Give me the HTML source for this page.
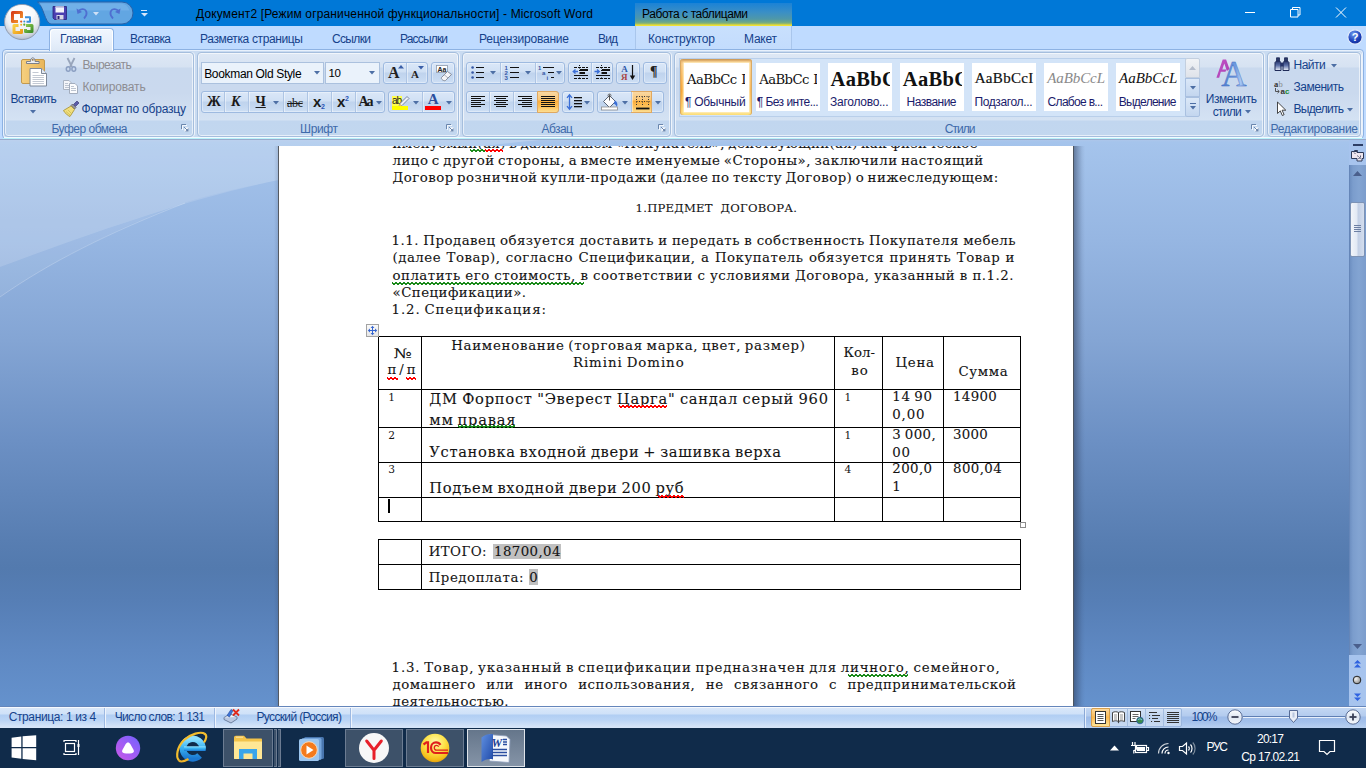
<!DOCTYPE html>
<html lang="ru">
<head>
<meta charset="utf-8">
<title>Документ2 - Microsoft Word</title>
<style>
*{box-sizing:border-box;margin:0;padding:0}
html,body{width:1366px;height:768px;overflow:hidden;background:#bfdbff}
body{position:relative;font-family:"Liberation Sans",sans-serif;font-size:12px;color:#15428b}
.abs{position:absolute}
.t{position:absolute;white-space:pre;line-height:1}
svg{display:block;overflow:visible}
</style>
</head>
<body>
<div style="position:absolute;left:0px;top:0px;width:1366px;height:26px;background:#0078d7"></div>
<svg class="abs" style="left:30px;top:0" width="120" height="27" viewBox="0 0 120 27"><path d="M7.500 2H92a11 11 0 0 1 0 22H21C15 24 13 4 7.500 2Z" fill="#62a6e2" stroke="#2a62a8" stroke-width="1"/><path d="M8 3.5 H90 a10 10 0 0 1 9.5 7 H13.5 C 12 7 10.5 4.5 8 3.5Z" fill="#7db8ec" opacity=".55"/></svg>
<span class="t" style="left:196px;top:8.04px;font-size:12px;color:#000;letter-spacing:0.144px;">Документ2 [Режим ограниченной функциональности] - Microsoft Word</span>
<div style="position:absolute;left:635px;top:3px;width:157px;height:23px;background:linear-gradient(#1b82d6 0%,#3a8fc6 40%,#4f98a8 70%,#6ea888 84%,#9fbc66 91%,#f2e22c 96%,#ece040 100%)"></div>
<span class="t" style="left:642px;top:8.04px;font-size:12px;color:#000;letter-spacing:-0.403px;">Работа с таблицами</span>
<svg class="abs" style="left:1236px;top:0" width="120" height="26" viewBox="0 0 120 26" fill="none" stroke="#fff" stroke-width="1"><path d="M9 12.5h10"/><path d="M54.5 9.5h7.5v7.5h-7.5z M56.5 9.5v-2h7.5v7.5h-2"/><path d="M100 7.5l10 10M110 7.5l-10 10"/></svg>
<div style="position:absolute;left:0px;top:26px;width:1366px;height:24px;background:#bfdbff"></div>
<div style="position:absolute;left:635px;top:26px;width:157px;height:23px;background:linear-gradient(#c9e0fd,#c3dcfd);border-left:1px solid #a9c6ec;border-right:1px solid #a9c6ec"></div>
<span class="t" style="left:130px;top:32.84px;font-size:12px;color:#15428b;letter-spacing:-0.602px;">Вставка</span>
<span class="t" style="left:200px;top:32.84px;font-size:12px;color:#15428b;letter-spacing:-0.367px;">Разметка страницы</span>
<span class="t" style="left:332px;top:32.84px;font-size:12px;color:#15428b;letter-spacing:-0.650px;">Ссылки</span>
<span class="t" style="left:400px;top:32.84px;font-size:12px;color:#15428b;letter-spacing:-0.837px;">Рассылки</span>
<span class="t" style="left:479px;top:32.84px;font-size:12px;color:#15428b;letter-spacing:-0.206px;">Рецензирование</span>
<span class="t" style="left:598px;top:32.84px;font-size:12px;color:#15428b;letter-spacing:-0.859px;">Вид</span>
<span class="t" style="left:648px;top:32.84px;font-size:12px;color:#15428b;letter-spacing:-0.142px;">Конструктор</span>
<span class="t" style="left:744px;top:32.84px;font-size:12px;color:#15428b;letter-spacing:-0.242px;">Макет</span>
<svg class="abs" style="left:1347px;top:29px" width="16" height="16" viewBox="0 0 16 16"><defs><radialGradient id="hg" cx=".4" cy=".3" r=".8"><stop offset="0" stop-color="#6f9cf0"/><stop offset=".6" stop-color="#1c3fb8"/><stop offset="1" stop-color="#0f2a8c"/></radialGradient></defs><circle cx="8" cy="8" r="7.2" fill="url(#hg)" stroke="#dfe9fb" stroke-width="1.2"/><text x="8" y="12" text-anchor="middle" font-family="Liberation Sans,sans-serif" font-weight="bold" font-size="11" fill="#fff">?</text></svg>
<div class="abs" style="left:2px;top:49px;width:1362px;height:90px;border:1px solid #8db2e3;border-radius:4px;background:#c9dbf1;box-shadow:inset 0 0 0 1px #e8f1fc"></div>
<div style="position:absolute;left:4px;top:137px;width:1358px;height:1px;background:#f2faff"></div>
<div style="position:absolute;left:3px;top:138px;width:1360px;height:1px;background:#b8f2fa"></div>
<div class="abs" style="left:49px;top:28px;width:65px;height:23px;border:1px solid #8db2e3;border-bottom:none;border-radius:4px 4px 0 0;background:linear-gradient(#f0f6fe,#e6effb 60%,#dde8f6);box-shadow:inset 1px 1px 0 #fff,inset -1px 0 0 #fff"></div>
<span class="t" style="left:60px;top:32.84px;font-size:12px;color:#15428b;letter-spacing:-0.615px;">Главная</span>
<div class="abs" style="left:4px;top:52px;width:190px;height:85px;border:1px solid #a5bedd;border-radius:4px;background:linear-gradient(#dee8f5 0,#d6e2f2 14px,#c9d9ee 15px,#cad9ee 40px,#d4e2f3 67px,#c1d6ef 68px,#c2d7ef 100%);box-shadow:inset 0 0 0 1px rgba(255,255,255,.6),1px 0 0 rgba(255,255,255,.7)"></div>
<span class="t" style="left:51.5px;top:122.54px;font-size:12px;color:#3e6aaa;letter-spacing:-0.504px;">Буфер обмена</span>
<svg class="abs" style="left:181px;top:124px" width="9" height="9" viewBox="0 0 9 9"><path d="M.5 5V.5H5" fill="none" stroke="#6a86ad"/><path d="M1.5 6V1.5H6" fill="none" stroke="#fff" opacity=".8"/><path d="M3.5 3.5h4v4h-4z" fill="#fff"/><path d="M7.5 4v3.5H4z" fill="#6a86ad"/><path d="M3 3l3 3" stroke="#6a86ad"/></svg>
<div class="abs" style="left:197px;top:52px;width:262px;height:85px;border:1px solid #a5bedd;border-radius:4px;background:linear-gradient(#dee8f5 0,#d6e2f2 14px,#c9d9ee 15px,#cad9ee 40px,#d4e2f3 67px,#c1d6ef 68px,#c2d7ef 100%);box-shadow:inset 0 0 0 1px rgba(255,255,255,.6),1px 0 0 rgba(255,255,255,.7)"></div>
<span class="t" style="left:300px;top:122.54px;font-size:12px;color:#3e6aaa;letter-spacing:-0.371px;">Шрифт</span>
<svg class="abs" style="left:446px;top:124px" width="9" height="9" viewBox="0 0 9 9"><path d="M.5 5V.5H5" fill="none" stroke="#6a86ad"/><path d="M1.5 6V1.5H6" fill="none" stroke="#fff" opacity=".8"/><path d="M3.5 3.5h4v4h-4z" fill="#fff"/><path d="M7.5 4v3.5H4z" fill="#6a86ad"/><path d="M3 3l3 3" stroke="#6a86ad"/></svg>
<div class="abs" style="left:462px;top:52px;width:209px;height:85px;border:1px solid #a5bedd;border-radius:4px;background:linear-gradient(#dee8f5 0,#d6e2f2 14px,#c9d9ee 15px,#cad9ee 40px,#d4e2f3 67px,#c1d6ef 68px,#c2d7ef 100%);box-shadow:inset 0 0 0 1px rgba(255,255,255,.6),1px 0 0 rgba(255,255,255,.7)"></div>
<span class="t" style="left:541.6px;top:122.54px;font-size:12px;color:#3e6aaa;letter-spacing:-0.568px;">Абзац</span>
<svg class="abs" style="left:658px;top:124px" width="9" height="9" viewBox="0 0 9 9"><path d="M.5 5V.5H5" fill="none" stroke="#6a86ad"/><path d="M1.5 6V1.5H6" fill="none" stroke="#fff" opacity=".8"/><path d="M3.5 3.5h4v4h-4z" fill="#fff"/><path d="M7.5 4v3.5H4z" fill="#6a86ad"/><path d="M3 3l3 3" stroke="#6a86ad"/></svg>
<div class="abs" style="left:674px;top:52px;width:590px;height:85px;border:1px solid #a5bedd;border-radius:4px;background:linear-gradient(#dee8f5 0,#d6e2f2 14px,#c9d9ee 15px,#cad9ee 40px,#d4e2f3 67px,#c1d6ef 68px,#c2d7ef 100%);box-shadow:inset 0 0 0 1px rgba(255,255,255,.6),1px 0 0 rgba(255,255,255,.7)"></div>
<span class="t" style="left:944.7px;top:122.54px;font-size:12px;color:#3e6aaa;letter-spacing:-0.920px;">Стили</span>
<svg class="abs" style="left:1251px;top:124px" width="9" height="9" viewBox="0 0 9 9"><path d="M.5 5V.5H5" fill="none" stroke="#6a86ad"/><path d="M1.5 6V1.5H6" fill="none" stroke="#fff" opacity=".8"/><path d="M3.5 3.5h4v4h-4z" fill="#fff"/><path d="M7.5 4v3.5H4z" fill="#6a86ad"/><path d="M3 3l3 3" stroke="#6a86ad"/></svg>
<div class="abs" style="left:1267px;top:52px;width:94px;height:85px;border:1px solid #a5bedd;border-radius:4px;background:linear-gradient(#dee8f5 0,#d6e2f2 14px,#c9d9ee 15px,#cad9ee 40px,#d4e2f3 67px,#c1d6ef 68px,#c2d7ef 100%);box-shadow:inset 0 0 0 1px rgba(255,255,255,.6),1px 0 0 rgba(255,255,255,.7)"></div>
<span class="t" style="left:1270.5px;top:122.54px;font-size:12px;color:#3e6aaa;letter-spacing:-0.302px;">Редактирование</span>
<svg class="abs" style="left:19px;top:56px" width="30" height="32" viewBox="0 0 30 32">
<defs><linearGradient id="cb" x1="0" x2="1"><stop offset="0" stop-color="#f6d07f"/><stop offset="1" stop-color="#e9b559"/></linearGradient></defs>
<rect x="2.500" y="3.500" width="23" height="24" rx="1.500" fill="url(#cb)" stroke="#c39a4e"/>
<path d="M7.500 7.500V5.500h4c0-2 .8-3.700 2.300-3.700s2.300 1.700 2.300 3.700h4v2z" fill="#eceef2" stroke="#6f7684" stroke-width=".9"/><circle cx="13.800" cy="3.800" r=".9" fill="#8a6a3a"/>
<path d="M11 12.500h11.500l5 5v12.500H11z" fill="#fff" stroke="#7d8899"/>
<path d="M22.500 12.500v5h5" fill="#e4e9f1" stroke="#7d8899"/>
<path d="M13.500 16.500h6M13.500 19.500h11.500M13.500 21.500h11.500M13.500 23.500h11.500M13.500 25.500h11.500M13.500 27.500h11.500" stroke="#c3c9d3" stroke-width="1"/>
</svg>
<span class="t" style="left:10.5px;top:92.74px;font-size:12px;color:#15428b;letter-spacing:-0.654px;">Вставить</span>
<svg class="abs" style="left:30.4px;top:110.2px" width="6" height="4" viewBox="0 0 6 4"><path d="M0 0h6l-3.0 3.5z" fill="#4d6fa5"/></svg>
<svg class="abs" style="left:64px;top:57px" width="14" height="16" viewBox="0 0 14 16" fill="none">
<path d="M3.500 1l4.500 9M10.500 1L6 10" stroke="#98a5bb" stroke-width="1.800"/>
<ellipse cx="4.200" cy="12" rx="1.900" ry="2.300" stroke="#8b9fc2" stroke-width="1.500"/><ellipse cx="9.800" cy="12" rx="1.900" ry="2.300" stroke="#8b9fc2" stroke-width="1.500"/></svg>
<span class="t" style="left:82.4px;top:58.84px;font-size:12px;color:#8d8d92;letter-spacing:-0.568px;">Вырезать</span>
<svg class="abs" style="left:62px;top:80px" width="17" height="14" viewBox="0 0 17 14">
<path d="M1.500 .5h5.500l2.500 2.500v6.500h-8z" fill="#f4f6fa" stroke="#a9b3c2"/><path d="M3 3.500h3M3 5.500h5M3 7.500h5" stroke="#bcc4d0"/>
<path d="M7.500 3.500h5.500l2.500 2.500v7.500h-8z" fill="#fbfcfe" stroke="#a3adbd"/><path d="M9 6.500h3M9 8.500h5M9 10.500h5" stroke="#bcc4d0"/></svg>
<span class="t" style="left:82.4px;top:81.14px;font-size:12px;color:#8d8d92;letter-spacing:-0.147px;">Копировать</span>
<svg class="abs" style="left:62px;top:100px" width="18" height="17" viewBox="0 0 18 17">
<path d="M11.500 4.500l3.500-3.500 2 2-3.500 3.500z" fill="#5c5ca8" stroke="#3c3c78" stroke-width=".7"/>
<path d="M9 5.500l3.500 3.500 1.500-1.500-3.500-3.500z" fill="#9a9aa0" stroke="#55555d" stroke-width=".7"/>
<path d="M1.500 10.500l7.500-4.500 3.500 3.500-4.500 7c-1.500-.5-5.500-3.500-6.500-6z" fill="#f0de7c" stroke="#a58f2e" stroke-width=".8"/>
<path d="M4 11.500l4 3.500M6 10l3.500 3.500" stroke="#c9b44a" stroke-width=".7"/></svg>
<span class="t" style="left:81.5px;top:103.24px;font-size:12px;color:#15428b;letter-spacing:-0.194px;">Формат по образцу</span>
<div class="abs" style="left:201px;top:62px;width:123px;height:22px;border:1px solid #abc1de;background:#eaf2fb"></div>
<div class="abs" style="left:325px;top:62px;width:55px;height:22px;border:1px solid #abc1de;background:#eaf2fb"></div>
<span class="t" style="left:204.2px;top:67.84px;font-size:12px;color:#000;letter-spacing:-0.332px;">Bookman Old Style</span>
<span class="t" style="left:328.6px;top:68.27px;font-size:11.5px;color:#000;letter-spacing:-0.600px;">10</span>
<svg class="abs" style="left:314.4px;top:70.5px" width="6" height="4" viewBox="0 0 6 4"><path d="M0 0h6l-3.0 3.5z" fill="#4d6fa5"/></svg>
<svg class="abs" style="left:369.3px;top:70.5px" width="6" height="4" viewBox="0 0 6 4"><path d="M0 0h6l-3.0 3.5z" fill="#4d6fa5"/></svg>
<div class="abs" style="left:383px;top:62px;width:45px;height:22px;border:1px solid #9ebae0;border-radius:3px;background:linear-gradient(#dae7f8 0,#d0e0f4 9px,#bfd3ed 10px,#c6d9f1 16px,#d3e3f7 22px);box-shadow:inset 0 0 0 1px rgba(255,255,255,.35)"><div style="position:absolute;left:22px;top:0;width:1px;height:20px;background:#aec5e4;box-shadow:1px 0 0 rgba(255,255,255,.45)"></div></div>
<span class="t" style="left:388px;top:65.30px;font-size:16px;font-family:'Liberation Serif',serif;color:#222;font-weight:bold;">A</span>
<span class="t" style="left:411px;top:69.49px;font-size:11px;font-family:'Liberation Serif',serif;color:#222;font-weight:bold;">A</span>
<svg class="abs" style="left:398px;top:65px" width="6" height="4"><path d="M0 3.500h6L3 0z" fill="#3b5fa8"/></svg>
<svg class="abs" style="left:418px;top:66px" width="6" height="4"><path d="M0 0h6L3 3.500z" fill="#3b5fa8"/></svg>
<div class="abs" style="left:431px;top:62px;width:24px;height:22px;border:1px solid #9ebae0;border-radius:3px;background:linear-gradient(#dae7f8 0,#d0e0f4 9px,#bfd3ed 10px,#c6d9f1 16px,#d3e3f7 22px);box-shadow:inset 0 0 0 1px rgba(255,255,255,.35)"></div>
<svg class="abs" style="left:435px;top:64px" width="18" height="18" viewBox="0 0 18 18">
<rect x="1.500" y="1.500" width="11" height="7" fill="#fff" stroke="#8d99ab" stroke-width=".8"/>
<text x="2.500" y="8" font-family="Liberation Sans,sans-serif" font-size="7" font-weight="bold" fill="#222">Aa</text>
<path d="M6.500 13.500l6-6 4 3-6 6c-1.500 1-5-1.500-4-3z" fill="#f4f4f8" stroke="#7d8594" stroke-width=".9"/><path d="M9 10.500l4 3.500" stroke="#9aa2b0" stroke-width=".8"/></svg>
<div class="abs" style="left:201px;top:91px;width:184px;height:22px;border:1px solid #9ebae0;border-radius:3px;background:linear-gradient(#dae7f8 0,#d0e0f4 9px,#bfd3ed 10px,#c6d9f1 16px,#d3e3f7 22px);box-shadow:inset 0 0 0 1px rgba(255,255,255,.35)"><div style="position:absolute;left:22px;top:0;width:1px;height:20px;background:#aec5e4;box-shadow:1px 0 0 rgba(255,255,255,.45)"></div><div style="position:absolute;left:46px;top:0;width:1px;height:20px;background:#aec5e4;box-shadow:1px 0 0 rgba(255,255,255,.45)"></div><div style="position:absolute;left:80.5px;top:0;width:1px;height:20px;background:#aec5e4;box-shadow:1px 0 0 rgba(255,255,255,.45)"></div><div style="position:absolute;left:105px;top:0;width:1px;height:20px;background:#aec5e4;box-shadow:1px 0 0 rgba(255,255,255,.45)"></div><div style="position:absolute;left:128.5px;top:0;width:1px;height:20px;background:#aec5e4;box-shadow:1px 0 0 rgba(255,255,255,.45)"></div><div style="position:absolute;left:153px;top:0;width:1px;height:20px;background:#aec5e4;box-shadow:1px 0 0 rgba(255,255,255,.45)"></div></div>
<span class="t" style="left:207px;top:94.88px;font-size:14px;font-family:'Liberation Serif',serif;color:#1a1a1a;font-weight:bold;">Ж</span>
<span class="t" style="left:231px;top:94.88px;font-size:14px;font-family:'Liberation Serif',serif;color:#1a1a1a;font-weight:bold;font-style:italic;">К</span>
<span class="t" style="left:255.5px;top:94.88px;font-size:14px;font-family:'Liberation Serif',serif;color:#1a1a1a;font-weight:bold;text-decoration:underline;">Ч</span>
<svg class="abs" style="left:273.4px;top:100.5px" width="6" height="4" viewBox="0 0 6 4"><path d="M0 0h6l-3.0 3.5z" fill="#4d6fa5"/></svg>
<span class="t" style="left:287px;top:96.55px;font-size:12px;font-family:'Liberation Serif',serif;color:#1a1a1a;letter-spacing:-0.328px;text-decoration:line-through;">abc</span>
<span class="t" style="left:313px;top:93.90px;font-size:15px;color:#1a1a1a;font-weight:bold;">x</span>
<span class="t" style="left:321px;top:102.57px;font-size:7px;color:#2a55b5;font-weight:bold;">2</span>
<span class="t" style="left:337px;top:93.90px;font-size:15px;color:#1a1a1a;font-weight:bold;">x</span>
<span class="t" style="left:345px;top:94.57px;font-size:7px;color:#2a55b5;font-weight:bold;">2</span>
<span class="t" style="left:358.5px;top:95.28px;font-size:14px;font-family:'Liberation Serif',serif;color:#1a1a1a;font-weight:bold;letter-spacing:-2.125px;">Aa</span>
<svg class="abs" style="left:375.9px;top:100.5px" width="6" height="4" viewBox="0 0 6 4"><path d="M0 0h6l-3.0 3.5z" fill="#4d6fa5"/></svg>
<div class="abs" style="left:388px;top:91px;width:67px;height:22px;border:1px solid #9ebae0;border-radius:3px;background:linear-gradient(#dae7f8 0,#d0e0f4 9px,#bfd3ed 10px,#c6d9f1 16px,#d3e3f7 22px);box-shadow:inset 0 0 0 1px rgba(255,255,255,.35)"><div style="position:absolute;left:33px;top:0;width:1px;height:20px;background:#aec5e4;box-shadow:1px 0 0 rgba(255,255,255,.45)"></div></div>
<div style="position:absolute;left:391.8px;top:96px;width:10.5px;height:10px;background:#ffff4d"></div>
<span class="t" style="left:392px;top:95.53px;font-size:10px;color:#222;letter-spacing:-1.125px;">ab</span>
<svg class="abs" style="left:397px;top:94px" width="13" height="13" viewBox="0 0 13 13"><path d="M3 9.500l7-7 2 2-7 7-3 .8z" fill="#eef1f7" stroke="#6d7c99" stroke-width=".9"/><path d="M3 9.500l2 2-3 .8z" fill="#e7c36a"/></svg>
<div style="position:absolute;left:391.8px;top:106px;width:16.6px;height:4px;background:#ffff00"></div>
<svg class="abs" style="left:412.6px;top:100.5px" width="6" height="4" viewBox="0 0 6 4"><path d="M0 0h6l-3.0 3.5z" fill="#4d6fa5"/></svg>
<span class="t" style="left:427.7px;top:92.24px;font-size:15px;font-family:'Liberation Serif',serif;color:#2b4f9e;font-weight:bold;">A</span>
<div style="position:absolute;left:425px;top:106px;width:16.2px;height:4px;background:#ff0000"></div>
<svg class="abs" style="left:445.5px;top:100.5px" width="6" height="4" viewBox="0 0 6 4"><path d="M0 0h6l-3.0 3.5z" fill="#4d6fa5"/></svg>
<div class="abs" style="left:466px;top:62px;width:99px;height:22px;border:1px solid #9ebae0;border-radius:3px;background:linear-gradient(#dae7f8 0,#d0e0f4 9px,#bfd3ed 10px,#c6d9f1 16px,#d3e3f7 22px);box-shadow:inset 0 0 0 1px rgba(255,255,255,.35)"><div style="position:absolute;left:33px;top:0;width:1px;height:20px;background:#aec5e4;box-shadow:1px 0 0 rgba(255,255,255,.45)"></div><div style="position:absolute;left:67.60000000000002px;top:0;width:1px;height:20px;background:#aec5e4;box-shadow:1px 0 0 rgba(255,255,255,.45)"></div></div>
<svg class="abs" style="left:470px;top:64px" width="16" height="16" viewBox="0 0 16 16"><g fill="#3557a5"><circle cx="2.600" cy="3.500" r="1.300"/><circle cx="2.600" cy="8.500" r="1.300"/><circle cx="2.600" cy="13.500" r="1.300"/></g><path d="M6 3.500h8M6 8.500h8M6 13.500h8" stroke="#111" stroke-width="1.200"/></svg>
<svg class="abs" style="left:490.3px;top:70.5px" width="6" height="4" viewBox="0 0 6 4"><path d="M0 0h6l-3.0 3.5z" fill="#4d6fa5"/></svg>
<svg class="abs" style="left:503px;top:64px" width="18" height="16" viewBox="0 0 18 16"><g font-family="Liberation Sans,sans-serif" font-size="6" font-weight="bold" fill="#3557a5"><text x="1.500" y="5.500">1</text><text x="1.500" y="10.500">2</text><text x="1.500" y="15.500">3</text></g><path d="M7 3.500h9M7 8.500h9M7 13.500h9" stroke="#111" stroke-width="1.200"/></svg>
<svg class="abs" style="left:525.3px;top:70.5px" width="6" height="4" viewBox="0 0 6 4"><path d="M0 0h6l-3.0 3.5z" fill="#4d6fa5"/></svg>
<svg class="abs" style="left:537px;top:64px" width="19" height="17" viewBox="0 0 19 17"><g font-family="Liberation Sans,sans-serif" font-size="6" font-weight="bold" fill="#3557a5"><text x="1" y="5.500">1</text><text x="5" y="10.500">a</text><text x="9.500" y="16">i</text></g><path d="M6 3.500h11M11 8.500h6M14 13.500h3" stroke="#111" stroke-width="1.200"/></svg>
<svg class="abs" style="left:555.7px;top:70.5px" width="6" height="4" viewBox="0 0 6 4"><path d="M0 0h6l-3.0 3.5z" fill="#4d6fa5"/></svg>
<div class="abs" style="left:568px;top:62px;width:45px;height:22px;border:1px solid #9ebae0;border-radius:3px;background:linear-gradient(#dae7f8 0,#d0e0f4 9px,#bfd3ed 10px,#c6d9f1 16px,#d3e3f7 22px);box-shadow:inset 0 0 0 1px rgba(255,255,255,.35)"><div style="position:absolute;left:21.799999999999955px;top:0;width:1px;height:20px;background:#aec5e4;box-shadow:1px 0 0 rgba(255,255,255,.45)"></div></div>
<svg class="abs" style="left:572px;top:64px" width="17" height="16" viewBox="0 0 17 16"><path d="M6 7.500H1.500M3.500 5.500l-2.300 2 2.300 2" fill="none" stroke="#3b6fd6" stroke-width="1.300"/><path d="M2 3.500h14" stroke="#111" stroke-dasharray="3 1"/><path d="M8 5h8v2h-8zM8 8h5v2h-5z" fill="#111"/><path d="M2 11.500h14" stroke="#111"/><path d="M2 14.500h14" stroke="#111" stroke-dasharray="3 1"/><path d="M7.500 1v15" stroke="#111" stroke-dasharray="1 1.500"/></svg>
<svg class="abs" style="left:594px;top:64px" width="17" height="16" viewBox="0 0 17 16"><path d="M0.500 7.500H5M3 5.500l2.300 2-2.300 2" fill="none" stroke="#3b6fd6" stroke-width="1.300"/><path d="M2 3.500h14" stroke="#111" stroke-dasharray="3 1"/><path d="M8 5h8v2h-8zM8 8h5v2h-5z" fill="#111"/><path d="M2 11.500h14" stroke="#111"/><path d="M2 14.500h14" stroke="#111" stroke-dasharray="3 1"/><path d="M7.500 1v15" stroke="#111" stroke-dasharray="1 1.500"/></svg>
<div class="abs" style="left:616px;top:62px;width:24px;height:22px;border:1px solid #9ebae0;border-radius:3px;background:linear-gradient(#dae7f8 0,#d0e0f4 9px,#bfd3ed 10px,#c6d9f1 16px,#d3e3f7 22px);box-shadow:inset 0 0 0 1px rgba(255,255,255,.35)"></div>
<span class="t" style="left:621.2px;top:64.96px;font-size:9px;font-family:'Liberation Serif',serif;color:#2d56a8;font-weight:bold;">A</span>
<span class="t" style="left:621px;top:73.06px;font-size:9px;font-family:'Liberation Serif',serif;color:#a94444;font-weight:bold;">Я</span>
<svg class="abs" style="left:629px;top:64px" width="8" height="17" viewBox="0 0 8 17"><path d="M3.500 1v13" stroke="#111" stroke-width="1.200"/><path d="M.8 11.500L3.500 16l2.700-4.500z" fill="#111"/></svg>
<div class="abs" style="left:643px;top:62px;width:24px;height:22px;border:1px solid #9ebae0;border-radius:3px;background:linear-gradient(#dae7f8 0,#d0e0f4 9px,#bfd3ed 10px,#c6d9f1 16px,#d3e3f7 22px);box-shadow:inset 0 0 0 1px rgba(255,255,255,.35)"></div>
<span class="t" style="left:650px;top:64.58px;font-size:14px;font-family:'Liberation Serif',serif;color:#222;font-weight:bold;">¶</span>
<div class="abs" style="left:466px;top:91px;width:93px;height:22px;border:1px solid #9ebae0;border-radius:3px;background:linear-gradient(#dae7f8 0,#d0e0f4 9px,#bfd3ed 10px,#c6d9f1 16px,#d3e3f7 22px);box-shadow:inset 0 0 0 1px rgba(255,255,255,.35)"><div style="position:absolute;left:69.79999999999995px;top:-1px;width:21.800000000000068px;height:22px;background:linear-gradient(#f9d8a2 0,#fbc776 8px,#fbad3c 9px,#fcc25e 15px,#fde9a6 22px);border:1px solid #e0a860;border-radius:0 3px 3px 0"></div><div style="position:absolute;left:22px;top:0;width:1px;height:20px;background:#aec5e4;box-shadow:1px 0 0 rgba(255,255,255,.45)"></div><div style="position:absolute;left:45.60000000000002px;top:0;width:1px;height:20px;background:#aec5e4;box-shadow:1px 0 0 rgba(255,255,255,.45)"></div></div>
<svg class="abs" style="left:471px;top:96px" width="14" height="12" viewBox="0 0 14 12"><path d="M0 0.5h14M0 2.5h10M0 4.5h14M0 6.5h10M0 8.5h14M0 10.5h10" stroke="#111" stroke-width="1"/></svg>
<svg class="abs" style="left:494px;top:96px" width="14" height="12" viewBox="0 0 14 12"><path d="M0 0.5h14M2 2.5h10M0 4.5h14M2 6.5h10M0 8.5h14M2 10.5h10" stroke="#111" stroke-width="1"/></svg>
<svg class="abs" style="left:518px;top:96px" width="14" height="12" viewBox="0 0 14 12"><path d="M0 0.5h14M4 2.5h10M0 4.5h14M4 6.5h10M0 8.5h14M4 10.5h10" stroke="#111" stroke-width="1"/></svg>
<svg class="abs" style="left:541px;top:96px" width="14" height="12" viewBox="0 0 14 12"><path d="M0 0.5h14M0 2.5h14M0 4.5h14M0 6.5h14M0 8.5h14M0 10.5h14" stroke="#111" stroke-width="1"/></svg>
<div class="abs" style="left:562px;top:91px;width:32px;height:22px;border:1px solid #9ebae0;border-radius:3px;background:linear-gradient(#dae7f8 0,#d0e0f4 9px,#bfd3ed 10px,#c6d9f1 16px,#d3e3f7 22px);box-shadow:inset 0 0 0 1px rgba(255,255,255,.35)"></div>
<svg class="abs" style="left:566px;top:94px" width="18" height="17" viewBox="0 0 18 17"><path d="M3.500 1v14M1 3.800L3.500 .8 6 3.800M1 12.200L3.500 15.200 6 12.200" fill="none" stroke="#3b6fd6" stroke-width="1.300"/><path d="M8 3.500h8M8 6.500h8M8 9.500h8M8 12.500h8" stroke="#111" stroke-width="1"/><path d="M8 4.500h8M8 7.500h8M8 10.500h8M8 13.500h8" stroke="#111" stroke-width="1" opacity=".3"/></svg>
<svg class="abs" style="left:583.6px;top:100.5px" width="6" height="4" viewBox="0 0 6 4"><path d="M0 0h6l-3.0 3.5z" fill="#4d6fa5"/></svg>
<div class="abs" style="left:597px;top:91px;width:67px;height:22px;border:1px solid #9ebae0;border-radius:3px;background:linear-gradient(#dae7f8 0,#d0e0f4 9px,#bfd3ed 10px,#c6d9f1 16px,#d3e3f7 22px);box-shadow:inset 0 0 0 1px rgba(255,255,255,.35)"><div style="position:absolute;left:33px;top:-1px;width:21px;height:22px;background:linear-gradient(#f9d8a2 0,#fbc776 8px,#fbad3c 9px,#fcc25e 15px,#fde9a6 22px);border:1px solid #e0a860;border-radius:0"></div><div style="position:absolute;left:33px;top:0;width:1px;height:20px;background:#aec5e4;box-shadow:1px 0 0 rgba(255,255,255,.45)"></div></div>
<svg class="abs" style="left:600px;top:93px" width="19" height="18" viewBox="0 0 19 18"><path d="M3.500 8.500l6-6 6 6-6 6z" fill="#fdfdfe" stroke="#4a5568" stroke-width=".9"/><path d="M9.500 1.500v6" stroke="#555" stroke-width="1"/><circle cx="9.500" cy="2.500" r="1.500" fill="none" stroke="#555" stroke-width=".8"/><path d="M15 7.500c2 1 3 3.500 2 6.500-1-2-2-3-3.500-3.500z" fill="#3b6fd6"/><rect x="1.500" y="14" width="16" height="3" fill="#fff" stroke="#8d8d8d" stroke-width=".8"/></svg>
<svg class="abs" style="left:621.6px;top:100.5px" width="6" height="4" viewBox="0 0 6 4"><path d="M0 0h6l-3.0 3.5z" fill="#4d6fa5"/></svg>
<svg class="abs" style="left:635px;top:95px" width="15" height="15" viewBox="0 0 15 15"><path d="M1.500 1.500h13M1.500 6.500h13M1.500 11.500h0" stroke="#333" stroke-dasharray="1 1.500"/><path d="M1.500 1.500v10M7.500 1.500v10M13.500 1.500v10" stroke="#333" stroke-dasharray="1 1.500"/><path d="M1 13.500h13.500" stroke="#111" stroke-width="1.800"/></svg>
<svg class="abs" style="left:654.5px;top:100.5px" width="6" height="4" viewBox="0 0 6 4"><path d="M0 0h6l-3.0 3.5z" fill="#4d6fa5"/></svg>
<div class="abs" style="left:679px;top:58px;width:507px;height:59px;background:#d3e4f8;border:1px solid #b9cfea;border-right:none"></div>
<div class="abs" style="left:680px;top:59px;width:72px;height:56px;border-radius:3px;background:linear-gradient(#c39355 0,#e9b772 2px,#f8c680 5px,#f9ae48 24px,#f8a333 32px,#fbc45c 46px,#fde07a 56px);box-shadow:inset 1px 0 0 #d9a863,inset -1px 0 0 #d9a863"></div>
<div style="position:absolute;left:684px;top:63px;width:64.5px;height:48.5px;background:#fff;box-shadow:0 0 1.500px 1px #fff1c4"></div>
<span class="t" style="left:687px;top:72.73px;font-size:13.2px;font-family:'DejaVu Serif',serif;color:#111;letter-spacing:-0.560px;">AaBbCc</span>
<div class="abs" style="left:740px;top:0px;width:5px;height:768px;overflow:hidden"><span class="t" style="left:1.2000000000000455px;top:72.73px;font-size:13.2px;font-family:'DejaVu Serif',serif;color:#111;">I</span></div>
<span class="t" style="left:685px;top:95.64px;font-size:12px;color:#1b1b6b;letter-spacing:-0.279px;">¶ Обычный</span>
<div style="position:absolute;left:756px;top:62.5px;width:64px;height:48.5px;background:#fff"></div>
<div style="position:absolute;left:828px;top:62.5px;width:64px;height:48.5px;background:#fff"></div>
<div style="position:absolute;left:900px;top:62.5px;width:64px;height:48.5px;background:#fff"></div>
<div style="position:absolute;left:972px;top:62.5px;width:64px;height:48.5px;background:#fff"></div>
<div style="position:absolute;left:1044px;top:62.5px;width:64px;height:48.5px;background:#fff"></div>
<div style="position:absolute;left:1116px;top:62.5px;width:64px;height:48.5px;background:#fff"></div>
<span class="t" style="left:759.2px;top:72.73px;font-size:13.2px;font-family:'DejaVu Serif',serif;color:#111;letter-spacing:-0.560px;">AaBbCc</span>
<div class="abs" style="left:812px;top:0px;width:5px;height:768px;overflow:hidden"><span class="t" style="left:1.2000000000000455px;top:72.73px;font-size:13.2px;font-family:'DejaVu Serif',serif;color:#111;">I</span></div>
<span class="t" style="left:756.7px;top:95.64px;font-size:12px;color:#1b1b6b;letter-spacing:-0.532px;">¶ Без инте...</span>
<div class="abs" style="left:829px;top:0px;width:60.5px;height:768px;overflow:hidden"><span class="t" style="left:1.6000000000000227px;top:68.63px;font-size:20.5px;font-family:'Liberation Serif',serif;color:#111;font-weight:bold;letter-spacing:0.350px;">AaBbC</span></div>
<span class="t" style="left:830px;top:95.64px;font-size:12px;color:#1b1b6b;letter-spacing:-0.267px;">Заголово...</span>
<div class="abs" style="left:901px;top:0px;width:60.5px;height:768px;overflow:hidden"><span class="t" style="left:1.7999999999999545px;top:68.63px;font-size:20.5px;font-family:'Liberation Serif',serif;color:#111;font-weight:bold;letter-spacing:0.350px;">AaBbC</span></div>
<span class="t" style="left:906.5px;top:95.64px;font-size:12px;color:#1b1b6b;letter-spacing:-0.518px;">Название</span>
<div class="abs" style="left:973px;top:0px;width:61.5px;height:768px;overflow:hidden"><span class="t" style="left:1.7000000000000455px;top:71.04px;font-size:15px;font-family:'Liberation Serif',serif;color:#111;letter-spacing:0.324px;-webkit-text-stroke:.2px #111;">AaBbCcI</span></div>
<span class="t" style="left:974.4px;top:95.64px;font-size:12px;color:#1b1b6b;letter-spacing:-0.365px;">Подзагол...</span>
<div class="abs" style="left:1045px;top:0px;width:61.5px;height:768px;overflow:hidden"><span class="t" style="left:2.2999999999999545px;top:71.04px;font-size:15px;font-family:'Liberation Serif',serif;color:#8a8a8a;font-style:italic;letter-spacing:-0.107px;">AaBbCcL</span></div>
<span class="t" style="left:1047.6px;top:95.64px;font-size:12px;color:#1b1b6b;letter-spacing:-0.688px;">Слабое в...</span>
<div class="abs" style="left:1117px;top:0px;width:61.5px;height:768px;overflow:hidden"><span class="t" style="left:2px;top:71.04px;font-size:15px;font-family:'Liberation Serif',serif;color:#111;font-style:italic;letter-spacing:-0.007px;">AaBbCcL</span></div>
<span class="t" style="left:1118.7px;top:95.64px;font-size:12px;color:#1b1b6b;letter-spacing:-0.737px;">Выделение</span>
<div class="abs" style="left:1185px;top:58px;width:15px;height:20px;border:1px solid #c3cfdf;border-radius:2px 2px 0 0;background:linear-gradient(#f1f3f6,#dfe3ea)"></div>
<svg class="abs" style="left:1189px;top:66px" width="7" height="4"><path d="M0 4h7L3.500 0z" fill="#b4bccb"/></svg>
<div class="abs" style="left:1185px;top:78px;width:15px;height:19px;border:1px solid #a9c0e0;background:linear-gradient(#dbe8f8,#c3d6ef)"></div>
<svg class="abs" style="left:1189.6px;top:86.0px" width="6" height="4" viewBox="0 0 6 4"><path d="M0 0h6l-3.0 3.5z" fill="#4d6fa5"/></svg>
<div class="abs" style="left:1185px;top:97px;width:15px;height:20px;border:1px solid #a9c0e0;border-radius:0 0 2px 2px;background:linear-gradient(#dbe8f8,#c3d6ef)"></div>
<div style="position:absolute;left:1190px;top:103px;width:6px;height:1px;background:#4d6fa5"></div>
<svg class="abs" style="left:1189.6px;top:106.0px" width="6" height="4" viewBox="0 0 6 4"><path d="M0 0h6l-3.0 3.5z" fill="#4d6fa5"/></svg>
<svg class="abs" style="left:1213px;top:57px" width="36" height="32" viewBox="0 0 36 32">
<defs><linearGradient id="ap" x1="0" y1="0" x2="1" y2="1"><stop offset="0" stop-color="#c455c8"/><stop offset="1" stop-color="#a83db0"/></linearGradient>
<linearGradient id="ab" x1="0" y1="0" x2="1" y2="0"><stop offset="0" stop-color="#4f7fd0"/><stop offset=".55" stop-color="#6f9be0"/><stop offset=".75" stop-color="#a9c8f4"/><stop offset="1" stop-color="#4a7acb"/></linearGradient></defs>
<path d="M3.400 20.700L9.700 2.500h3.400l3.400 9.500-2.600 2-2.600-7.500-2 6h4l-.8 2.300H7.800L6.200 20.700z" fill="url(#ap)"/>
<text x="8.200" y="28.800" font-family="Liberation Serif,serif" font-size="35" fill="url(#ab)" stroke="#3f6cc0" stroke-width=".4">A</text></svg>
<span class="t" style="left:1205.7px;top:92.74px;font-size:12px;color:#15428b;letter-spacing:-0.406px;">Изменить</span>
<span class="t" style="left:1212.7px;top:106.04px;font-size:12px;color:#15428b;letter-spacing:-0.727px;">стили</span>
<svg class="abs" style="left:1244.9px;top:110.2px" width="6" height="4" viewBox="0 0 6 4"><path d="M0 0h6l-3.0 3.5z" fill="#4d6fa5"/></svg>
<svg class="abs" style="left:1274px;top:57px" width="16" height="15" viewBox="0 0 16 15">
<defs><linearGradient id="bn" x1="0" y1="0" x2="0" y2="1"><stop offset="0" stop-color="#26346a"/><stop offset=".45" stop-color="#5a6ea6"/><stop offset="1" stop-color="#eef2fa"/></linearGradient></defs>
<path d="M2.500 .8h3v4h-3zM10.500 .8h3v4h-3z" fill="#2a3768" stroke="#1c2752" stroke-width=".8"/>
<path d="M1 5.500l1.500-1.500h3l1.500 1.500v8H1zM9 5.500l1.500-1.500h3l1.500 1.500v8H9z" fill="url(#bn)" stroke="#1f2b58" stroke-width="1"/>
<path d="M6.500 6h3v3.500h-3z" fill="#26346a"/></svg>
<span class="t" style="left:1293.5px;top:59.14px;font-size:12px;color:#15428b;letter-spacing:-0.488px;">Найти</span>
<svg class="abs" style="left:1330.6px;top:63.5px" width="6" height="4" viewBox="0 0 6 4"><path d="M0 0h6l-3.0 3.5z" fill="#4d6fa5"/></svg>
<svg class="abs" style="left:1274px;top:80px" width="18" height="15" viewBox="0 0 18 15">
<text x="0" y="6.500" font-family="Liberation Serif,serif" font-size="8.500" font-weight="bold" fill="#333">a</text><text x="4.500" y="6.500" font-family="Liberation Serif,serif" font-size="8.500" fill="#888">b</text>
<path d="M1.500 8v3.500h3.500M3.500 9.800l1.800 1.700-1.800 1.700" fill="none" stroke="#444" stroke-width=".9"/>
<text x="6.500" y="14" font-family="Liberation Sans,sans-serif" font-size="8" font-weight="bold" fill="#333">a</text><text x="11" y="14" font-family="Liberation Sans,sans-serif" font-size="8" font-weight="bold" fill="#1c8a2c">c</text></svg>
<span class="t" style="left:1293.5px;top:81.14px;font-size:12px;color:#15428b;letter-spacing:-0.491px;">Заменить</span>
<svg class="abs" style="left:1276px;top:101px" width="11" height="16" viewBox="0 0 11 16"><path d="M1.500 1v11.500l2.800-2.600 2 4.600 1.800-.8-2-4.500h3.700z" fill="#fff" stroke="#333" stroke-width=".9"/></svg>
<span class="t" style="left:1293.5px;top:103.14px;font-size:12px;color:#15428b;letter-spacing:-0.694px;">Выделить</span>
<svg class="abs" style="left:1347.4px;top:107.5px" width="6" height="4" viewBox="0 0 6 4"><path d="M0 0h6l-3.0 3.5z" fill="#4d6fa5"/></svg>
<div style="position:absolute;left:0px;top:139px;width:1366px;height:1px;background:#98aacb"></div>
<div style="position:absolute;left:0px;top:140px;width:1366px;height:567px;background:linear-gradient(#adc6ea 0,#a5c4ec 2px,#96b6e2 100px,#84a5d4 200px,#6c90c4 300px,#587eb2 400px,#537aae 428px,#567eb5 460px,#5e88c2 510px,#6592cd 567px)"></div>
<svg class="abs" style="left:0;top:140px" width="560" height="200" viewBox="0 140 560 200">
<path d="M0 140H540C450 148 350 164 279 180C200 196 110 226 0 267Z" fill="#fff" opacity=".14"/>
<path d="M0 140H540C450 148 350 164 279 180C215 193 190 200 170 208C110 232 50 262 0 297Z" fill="#fff" opacity=".08"/>
<path d="M0 297C50 262 110 232 185 203" fill="none" stroke="#fff" stroke-width="1" opacity=".22"/>
</svg>
<div style="position:absolute;left:1074px;top:146px;width:11px;height:561px;background:linear-gradient(90deg,rgba(40,55,85,.5),rgba(40,55,85,.28) 4px,rgba(40,55,85,.08) 8px,rgba(40,55,85,0))"></div>
<div style="position:absolute;left:274px;top:146px;width:4px;height:561px;background:linear-gradient(90deg,rgba(40,55,85,0),rgba(40,55,85,.14))"></div>
<div style="position:absolute;left:278px;top:146px;width:796px;height:561px;background:#fff;border-left:1px solid #555a62;border-right:1px solid #4d5560"></div>
<div class="abs" style="left:279px;top:146px;width:794px;height:24px;overflow:hidden"><span class="t" style="left:113.5px;top:-8.58px;font-size:13.33px;font-family:'DejaVu Serif',serif;color:#141414;letter-spacing:0.386px;word-spacing:-1.300px;-webkit-text-stroke:.1px #141414;">именуемый(ая) в дальнейшем «Покупатель», действующий(ая) как физическое</span></div>
<span class="t" style="left:392.5px;top:153.62px;font-size:13.33px;font-family:'DejaVu Serif',serif;color:#141414;letter-spacing:0.494px;word-spacing:-1.300px;-webkit-text-stroke:.1px #141414;">лицо с другой стороны, а вместе именуемые «Стороны», заключили настоящий</span>
<span class="t" style="left:392.5px;top:171.02px;font-size:13.33px;font-family:'DejaVu Serif',serif;color:#141414;letter-spacing:0.465px;word-spacing:-1.300px;-webkit-text-stroke:.1px #141414;">Договор розничной купли-продажи (далее по тексту Договор) о нижеследующем:</span>
<span class="t" style="left:635.6px;top:203.09px;font-size:11.6px;font-family:'DejaVu Serif',serif;color:#141414;letter-spacing:0.247px;-webkit-text-stroke:.1px #141414;">1.ПРЕДМЕТ  ДОГОВОРА.</span>
<span class="t" style="left:391.5px;top:234.02px;font-size:13.33px;font-family:'DejaVu Serif',serif;color:#141414;letter-spacing:0.500px;word-spacing:-0.407px;-webkit-text-stroke:.1px #141414;">1.1. Продавец обязуется доставить и передать в собственность Покупателя мебель</span>
<span class="t" style="left:392.5px;top:251.42px;font-size:13.33px;font-family:'DejaVu Serif',serif;color:#141414;letter-spacing:0.500px;word-spacing:0.702px;-webkit-text-stroke:.1px #141414;">(далее Товар), согласно Спецификации, а Покупатель обязуется принять Товар и</span>
<span class="t" style="left:392.5px;top:268.82px;font-size:13.33px;font-family:'DejaVu Serif',serif;color:#141414;letter-spacing:0.500px;word-spacing:-0.127px;-webkit-text-stroke:.1px #141414;">оплатить его стоимость, в соответствии с условиями Договора, указанный в п.1.2.</span>
<span class="t" style="left:392.5px;top:286.22px;font-size:13.33px;font-family:'DejaVu Serif',serif;color:#141414;letter-spacing:0.471px;word-spacing:-1.300px;-webkit-text-stroke:.1px #141414;">«Спецификации».</span>
<span class="t" style="left:391.5px;top:303.32px;font-size:13.33px;font-family:'DejaVu Serif',serif;color:#141414;letter-spacing:0.926px;word-spacing:-1.300px;-webkit-text-stroke:.1px #141414;">1.2. Спецификация:</span>
<svg class="abs" style="left:392px;top:282px;overflow:hidden" width="192" height="3" viewBox="0 0 192 3" shape-rendering="crispEdges"><path d="M0 .5l2 2l2 -2l2 2l2 -2l2 2l2 -2l2 2l2 -2l2 2l2 -2l2 2l2 -2l2 2l2 -2l2 2l2 -2l2 2l2 -2l2 2l2 -2l2 2l2 -2l2 2l2 -2l2 2l2 -2l2 2l2 -2l2 2l2 -2l2 2l2 -2l2 2l2 -2l2 2l2 -2l2 2l2 -2l2 2l2 -2l2 2l2 -2l2 2l2 -2l2 2l2 -2l2 2l2 -2l2 2l2 -2l2 2l2 -2l2 2l2 -2l2 2l2 -2l2 2l2 -2l2 2l2 -2l2 2l2 -2l2 2l2 -2l2 2l2 -2l2 2l2 -2l2 2l2 -2l2 2l2 -2l2 2l2 -2l2 2l2 -2l2 2l2 -2l2 2l2 -2l2 2l2 -2l2 2l2 -2l2 2l2 -2l2 2l2 -2l2 2l2 -2l2 2l2 -2l2 2l2 -2l2 2l2 -2l2 2l2 -2" fill="none" stroke="#1a8a1a" stroke-width="1"/></svg>
<svg class="abs" style="left:470px;top:149px;overflow:hidden" width="15" height="3" viewBox="0 0 15 3" shape-rendering="crispEdges"><path d="M0 .5l2 2l2 -2l2 2l2 -2l2 2l2 -2l2 2l2 -2" fill="none" stroke="#1a8a1a" stroke-width="1"/></svg>
<svg class="abs" style="left:485px;top:149px;overflow:hidden" width="18" height="3" viewBox="0 0 18 3" shape-rendering="crispEdges"><path d="M0 .5l2 2l2 -2l2 2l2 -2l2 2l2 -2l2 2l2 -2l2 2l2 -2" fill="none" stroke="#ff0000" stroke-width="1"/></svg>
<div style="position:absolute;left:378px;top:336px;width:643px;height:1px;background:#000"></div>
<div style="position:absolute;left:378px;top:389px;width:643px;height:1px;background:#000"></div>
<div style="position:absolute;left:378px;top:427px;width:643px;height:1px;background:#000"></div>
<div style="position:absolute;left:378px;top:462px;width:643px;height:1px;background:#000"></div>
<div style="position:absolute;left:378px;top:497px;width:643px;height:1px;background:#000"></div>
<div style="position:absolute;left:378px;top:521px;width:643px;height:1px;background:#000"></div>
<div style="position:absolute;left:378px;top:336px;width:1px;height:186px;background:#000"></div>
<div style="position:absolute;left:421px;top:336px;width:1px;height:186px;background:#000"></div>
<div style="position:absolute;left:834px;top:336px;width:1px;height:186px;background:#000"></div>
<div style="position:absolute;left:882px;top:336px;width:1px;height:186px;background:#000"></div>
<div style="position:absolute;left:943px;top:336px;width:1px;height:186px;background:#000"></div>
<div style="position:absolute;left:1020px;top:336px;width:1px;height:186px;background:#000"></div>
<svg class="abs" style="left:366px;top:324px" width="13" height="13" viewBox="0 0 13 13"><defs><linearGradient id="mh" x1="0" y1="0" x2="0" y2="1"><stop offset="0" stop-color="#fafafa"/><stop offset="1" stop-color="#e6e6e6"/></linearGradient></defs><rect x=".5" y=".5" width="12" height="12" fill="url(#mh)" stroke="#a3a3a3"/><path d="M6.500 3v7M3 6.500h7" stroke="#3565d0" stroke-width="1"/><path d="M6.500 1.800l1.900 2.200H4.600zM6.500 11.200l1.900-2.200H4.600zM1.800 6.500l2.200-1.900v3.800zM11.200 6.500L9 4.600v3.800z" fill="#3565d0"/></svg>
<div class="abs" style="left:1020px;top:522px;width:6px;height:6px;border:1px solid #8a8a8a;background:#fff"></div>
<span class="t" style="left:393.2px;top:346.72px;font-size:13.33px;font-family:'DejaVu Serif',serif;color:#141414;transform:scaleX(1.5);transform-origin:0 0;">№</span>
<span class="t" style="left:387.4px;top:363.42px;font-size:13.33px;font-family:'DejaVu Serif',serif;color:#141414;letter-spacing:2.967px;word-spacing:-1.300px;-webkit-text-stroke:.1px #141414;">п/п</span>
<svg class="abs" style="left:387px;top:377px;overflow:hidden" width="11" height="3" viewBox="0 0 11 3" shape-rendering="crispEdges"><path d="M0 .5l2 2l2 -2l2 2l2 -2l2 2l2 -2" fill="none" stroke="#ff0000" stroke-width="1"/></svg>
<svg class="abs" style="left:406px;top:377px;overflow:hidden" width="10" height="3" viewBox="0 0 10 3" shape-rendering="crispEdges"><path d="M0 .5l2 2l2 -2l2 2l2 -2l2 2l2 -2" fill="none" stroke="#ff0000" stroke-width="1"/></svg>
<span class="t" style="left:451.2px;top:338.82px;font-size:13.33px;font-family:'DejaVu Serif',serif;color:#141414;letter-spacing:0.730px;word-spacing:-1.300px;-webkit-text-stroke:.1px #141414;">Наименование (торговая марка, цвет, размер)</span>
<span class="t" style="left:572.9px;top:355.72px;font-size:13.33px;font-family:'DejaVu Serif',serif;color:#141414;letter-spacing:0.966px;word-spacing:-1.300px;-webkit-text-stroke:.1px #141414;">Rimini Domino</span>
<span class="t" style="left:843.6px;top:346.42px;font-size:13.33px;font-family:'DejaVu Serif',serif;color:#141414;letter-spacing:0.029px;word-spacing:-1.300px;-webkit-text-stroke:.1px #141414;">Кол-</span>
<span class="t" style="left:851.3px;top:364.22px;font-size:13.33px;font-family:'DejaVu Serif',serif;color:#141414;letter-spacing:0.869px;word-spacing:-1.300px;-webkit-text-stroke:.1px #141414;">во</span>
<span class="t" style="left:895.6px;top:355.72px;font-size:13.33px;font-family:'DejaVu Serif',serif;color:#141414;letter-spacing:0.652px;word-spacing:-1.300px;-webkit-text-stroke:.1px #141414;">Цена</span>
<span class="t" style="left:958.5px;top:364.72px;font-size:13.33px;font-family:'DejaVu Serif',serif;color:#141414;letter-spacing:0.616px;word-spacing:-1.300px;-webkit-text-stroke:.1px #141414;">Сумма</span>
<span class="t" style="left:388.2px;top:392.97px;font-size:10.67px;font-family:'DejaVu Serif',serif;color:#141414;">1</span>
<span class="t" style="left:429.3px;top:392.39px;font-size:14.67px;font-family:'DejaVu Serif',serif;color:#141414;letter-spacing:0.750px;word-spacing:-0.955px;-webkit-text-stroke:.1px #141414;">ДМ Форпост "Эверест Царга" сандал серый 960</span>
<span class="t" style="left:429.3px;top:412.99px;font-size:14.67px;font-family:'DejaVu Serif',serif;color:#141414;letter-spacing:0.739px;word-spacing:-1.400px;-webkit-text-stroke:.1px #141414;">мм правая</span>
<svg class="abs" style="left:619px;top:405px;overflow:hidden" width="48" height="3" viewBox="0 0 48 3" shape-rendering="crispEdges"><path d="M0 .5l2 2l2 -2l2 2l2 -2l2 2l2 -2l2 2l2 -2l2 2l2 -2l2 2l2 -2l2 2l2 -2l2 2l2 -2l2 2l2 -2l2 2l2 -2l2 2l2 -2l2 2l2 -2l2 2l2 -2" fill="none" stroke="#ff0000" stroke-width="1"/></svg>
<svg class="abs" style="left:458px;top:425px;overflow:hidden" width="57" height="3" viewBox="0 0 57 3" shape-rendering="crispEdges"><path d="M0 .5l2 2l2 -2l2 2l2 -2l2 2l2 -2l2 2l2 -2l2 2l2 -2l2 2l2 -2l2 2l2 -2l2 2l2 -2l2 2l2 -2l2 2l2 -2l2 2l2 -2l2 2l2 -2l2 2l2 -2l2 2l2 -2l2 2l2 -2" fill="none" stroke="#1a8a1a" stroke-width="1"/></svg>
<span class="t" style="left:844.4px;top:392.97px;font-size:10.67px;font-family:'DejaVu Serif',serif;color:#141414;">1</span>
<span class="t" style="left:892.3px;top:389.92px;font-size:13.33px;font-family:'DejaVu Serif',serif;color:#141414;letter-spacing:0.710px;word-spacing:-1.300px;-webkit-text-stroke:.1px #141414;">14 90</span>
<span class="t" style="left:892.3px;top:407.72px;font-size:13.33px;font-family:'DejaVu Serif',serif;color:#141414;letter-spacing:0.838px;word-spacing:-1.300px;-webkit-text-stroke:.1px #141414;">0,00</span>
<span class="t" style="left:953px;top:389.92px;font-size:13.33px;font-family:'DejaVu Serif',serif;color:#141414;letter-spacing:0.348px;word-spacing:-1.300px;-webkit-text-stroke:.1px #141414;">14900</span>
<span class="t" style="left:388.2px;top:430.97px;font-size:10.67px;font-family:'DejaVu Serif',serif;color:#141414;">2</span>
<span class="t" style="left:429.3px;top:445.19px;font-size:14.67px;font-family:'DejaVu Serif',serif;color:#141414;letter-spacing:0.666px;word-spacing:-1.400px;-webkit-text-stroke:.1px #141414;">Установка входной двери + зашивка верха</span>
<span class="t" style="left:844.4px;top:430.97px;font-size:10.67px;font-family:'DejaVu Serif',serif;color:#141414;">1</span>
<span class="t" style="left:892.3px;top:427.72px;font-size:13.33px;font-family:'DejaVu Serif',serif;color:#141414;letter-spacing:0.481px;word-spacing:-1.300px;-webkit-text-stroke:.1px #141414;">3 000,</span>
<span class="t" style="left:892.3px;top:445.52px;font-size:13.33px;font-family:'DejaVu Serif',serif;color:#141414;letter-spacing:0.731px;word-spacing:-1.300px;-webkit-text-stroke:.1px #141414;">00</span>
<span class="t" style="left:953px;top:427.72px;font-size:13.33px;font-family:'DejaVu Serif',serif;color:#141414;letter-spacing:0.259px;word-spacing:-1.300px;-webkit-text-stroke:.1px #141414;">3000</span>
<span class="t" style="left:388.2px;top:465.47px;font-size:10.67px;font-family:'DejaVu Serif',serif;color:#141414;">3</span>
<span class="t" style="left:429.3px;top:481.29px;font-size:14.67px;font-family:'DejaVu Serif',serif;color:#141414;letter-spacing:0.692px;word-spacing:-1.400px;-webkit-text-stroke:.1px #141414;">Подъем входной двери 200 руб</span>
<svg class="abs" style="left:658px;top:495px;overflow:hidden" width="26" height="3" viewBox="0 0 26 3" shape-rendering="crispEdges"><path d="M0 .5l2 2l2 -2l2 2l2 -2l2 2l2 -2l2 2l2 -2l2 2l2 -2l2 2l2 -2l2 2l2 -2" fill="none" stroke="#ff0000" stroke-width="1"/></svg>
<span class="t" style="left:844.4px;top:465.47px;font-size:10.67px;font-family:'DejaVu Serif',serif;color:#141414;">4</span>
<span class="t" style="left:892.3px;top:462.42px;font-size:13.33px;font-family:'DejaVu Serif',serif;color:#141414;letter-spacing:0.386px;word-spacing:-1.300px;-webkit-text-stroke:.1px #141414;">200,0</span>
<span class="t" style="left:892.3px;top:480.12px;font-size:13.33px;font-family:'DejaVu Serif',serif;color:#141414;word-spacing:-1.300px;-webkit-text-stroke:.1px #141414;">1</span>
<span class="t" style="left:953px;top:462.42px;font-size:13.33px;font-family:'DejaVu Serif',serif;color:#141414;letter-spacing:0.412px;word-spacing:-1.300px;-webkit-text-stroke:.1px #141414;">800,04</span>
<div style="position:absolute;left:388px;top:499px;width:1.5px;height:14px;background:#000"></div>
<div style="position:absolute;left:378px;top:539px;width:643px;height:1px;background:#000"></div>
<div style="position:absolute;left:378px;top:564px;width:643px;height:1px;background:#000"></div>
<div style="position:absolute;left:378px;top:589px;width:643px;height:1px;background:#000"></div>
<div style="position:absolute;left:378px;top:539px;width:1px;height:51px;background:#000"></div>
<div style="position:absolute;left:421px;top:539px;width:1px;height:51px;background:#000"></div>
<div style="position:absolute;left:1020px;top:539px;width:1px;height:51px;background:#000"></div>
<div style="position:absolute;left:493.2px;top:543.7px;width:68px;height:15.8px;background:#c0c0c0"></div>
<span class="t" style="left:428.7px;top:544.82px;font-size:13.33px;font-family:'DejaVu Serif',serif;color:#141414;letter-spacing:0.423px;word-spacing:-1.300px;-webkit-text-stroke:.1px #141414;">ИТОГО:</span>
<span class="t" style="left:494px;top:544.82px;font-size:13.33px;font-family:'DejaVu Serif',serif;color:#141414;letter-spacing:0.413px;word-spacing:-1.300px;-webkit-text-stroke:.1px #141414;">18700,04</span>
<div style="position:absolute;left:528.8px;top:569.3px;width:8.8px;height:16px;background:#c0c0c0"></div>
<span class="t" style="left:428.7px;top:571.02px;font-size:13.33px;font-family:'DejaVu Serif',serif;color:#141414;letter-spacing:0.541px;word-spacing:-1.300px;-webkit-text-stroke:.1px #141414;">Предоплата:</span>
<span class="t" style="left:529.3px;top:571.02px;font-size:13.33px;font-family:'DejaVu Serif',serif;color:#141414;word-spacing:-1.300px;-webkit-text-stroke:.1px #141414;">0</span>
<span class="t" style="left:391.6px;top:660.62px;font-size:13.33px;font-family:'DejaVu Serif',serif;color:#141414;letter-spacing:0.836px;word-spacing:-1.300px;-webkit-text-stroke:.1px #141414;">1.3. Товар, указанный в спецификации предназначен для личного, семейного,</span>
<svg class="abs" style="left:848px;top:674px;overflow:hidden" width="60" height="3" viewBox="0 0 60 3" shape-rendering="crispEdges"><path d="M0 .5l2 2l2 -2l2 2l2 -2l2 2l2 -2l2 2l2 -2l2 2l2 -2l2 2l2 -2l2 2l2 -2l2 2l2 -2l2 2l2 -2l2 2l2 -2l2 2l2 -2l2 2l2 -2l2 2l2 -2l2 2l2 -2l2 2l2 -2l2 2l2 -2" fill="none" stroke="#1a8a1a" stroke-width="1"/></svg>
<span class="t" style="left:392.5px;top:677.52px;font-size:13.33px;font-family:'DejaVu Serif',serif;color:#141414;letter-spacing:0.500px;word-spacing:5.751px;-webkit-text-stroke:.1px #141414;">домашнего или иного использования, не связанного с предпринимательской</span>
<span class="t" style="left:392.5px;top:694.92px;font-size:13.33px;font-family:'DejaVu Serif',serif;color:#141414;letter-spacing:0.444px;word-spacing:-1.300px;-webkit-text-stroke:.1px #141414;">деятельностью.</span>
<div style="position:absolute;left:1349px;top:140px;width:17px;height:567px;background:#a7c4ee"></div>
<div style="position:absolute;left:1353px;top:144px;width:10px;height:2px;background:#2e3f66"></div>
<svg class="abs" style="left:1351px;top:150px" width="13" height="12" viewBox="0 0 13 12"><path d="M.5 1.500h6v-1h-3v1M.5 1.500v7h5.500v2.500h5v-2.500h1.500v-6h-6.500v-1.500" fill="#efe6ee" stroke="#2e3a58" stroke-width="1"/><path d="M3 2.500l1.500 1.500M6.500 5.500l1 1.500M9.500 5.500v2M7.500 9l1-1.500 1 1.500" stroke="#2e3a58" stroke-width=".8" fill="none"/></svg>
<div style="position:absolute;left:1349px;top:165px;width:17px;height:490px;background:linear-gradient(90deg,#6e90c2 0,#7b9dcd 3px,#83a4d2 9px,#7a9bcb 17px);border-left:1px solid #6586b8"></div>
<svg class="abs" style="left:1353px;top:171px" width="9" height="5"><path d="M0 5h9L4.500 0z" fill="#4a5f8c"/></svg>
<div class="abs" style="left:1350px;top:202px;width:15px;height:55px;border:1px solid #7d93b6;border-radius:2px;background:linear-gradient(90deg,#f2f5fa 0,#e2e9f4 45%,#c3d0e6 55%,#d4deee 100%)"></div>
<div style="position:absolute;left:1354px;top:225px;width:7px;height:1px;background:#6c7fa3"></div>
<div style="position:absolute;left:1354px;top:227px;width:7px;height:1px;background:#6c7fa3"></div>
<div style="position:absolute;left:1354px;top:229px;width:7px;height:1px;background:#6c7fa3"></div>
<div style="position:absolute;left:1354px;top:231px;width:7px;height:1px;background:#6c7fa3"></div>
<svg class="abs" style="left:1353px;top:644px" width="9" height="5"><path d="M0 0h9L4.500 5z" fill="#4a5f8c"/></svg>
<svg class="abs" style="left:1353px;top:659px" width="9" height="9"><path d="M1 4.500L4.500 1 8 4.500zM1 8.500L4.500 5 8 8.500z" fill="#2f62e0"/></svg>
<svg class="abs" style="left:1352px;top:675px" width="10" height="10"><defs><radialGradient id="bg1" cx=".35" cy=".35" r=".7"><stop offset="0" stop-color="#f4f4f4"/><stop offset="1" stop-color="#8d8d8d"/></radialGradient></defs><circle cx="5" cy="5" r="3.800" fill="url(#bg1)" stroke="#222" stroke-width="1"/></svg>
<svg class="abs" style="left:1353px;top:693px" width="9" height="9"><path d="M1 .5L4.500 4 8 .5zM1 4.500L4.500 8 8 4.500z" fill="#2f62e0"/></svg>
<div style="position:absolute;left:0px;top:706px;width:1366px;height:22px;background:linear-gradient(#6586bb 0,#6586bb 1px,#f6f9fe 1px,#f6f9fe 2px,#d9e7f9 2px,#cfe1f8 8px,#b1cef3 9px,#bad4f5 14px,#d6e5f8 21px,#d6e5f8 22px)"></div>
<div style="position:absolute;left:1085px;top:708px;width:281px;height:20px;background:linear-gradient(#c3d7f3 0,#b3cbee 8px,#9dbbe8 9px,#a4c1eb 14px,#b9d0f0 20px)"></div>
<div style="position:absolute;left:1084px;top:708px;width:1px;height:20px;background:#8aa8d6"></div>
<div style="position:absolute;left:1085px;top:708px;width:1px;height:20px;background:#e6effb"></div>
<span class="t" style="left:8.7px;top:710.84px;font-size:12px;color:#15428b;letter-spacing:-0.385px;">Страница: 1 из 4</span>
<span class="t" style="left:114.7px;top:710.84px;font-size:12px;color:#15428b;letter-spacing:-0.652px;">Число слов: 1 131</span>
<span class="t" style="left:256.5px;top:710.84px;font-size:12px;color:#15428b;letter-spacing:-0.654px;">Русский (Россия)</span>
<div style="position:absolute;left:104px;top:708px;width:1px;height:20px;background:#9db9e2"></div>
<div style="position:absolute;left:105px;top:708px;width:1px;height:20px;background:#eef4fc"></div>
<div style="position:absolute;left:214px;top:708px;width:1px;height:20px;background:#9db9e2"></div>
<div style="position:absolute;left:215px;top:708px;width:1px;height:20px;background:#eef4fc"></div>
<div style="position:absolute;left:350px;top:708px;width:1px;height:20px;background:#9db9e2"></div>
<div style="position:absolute;left:351px;top:708px;width:1px;height:20px;background:#eef4fc"></div>
<svg class="abs" style="left:223px;top:708px" width="18" height="17" viewBox="0 0 18 17">
<path d="M1 9.500l6-3.500 7 3-6 4z" fill="#f4f6fa" stroke="#5a6c8c" stroke-width=".8"/><path d="M1 9.500v2l7 3.500 6-4v-2" fill="#b9c8e2" stroke="#5a6c8c" stroke-width=".8"/>
<path d="M4 7.500l4-6 2 1-3.500 6.500z" fill="#3e74d8" stroke="#244a96" stroke-width=".6"/>
<path d="M10 1.500l6 6M16 1.500l-6 6" stroke="#e02a1c" stroke-width="1.800"/></svg>
<div class="abs" style="left:1091px;top:708px;width:91px;height:19px;border:1px solid #9ab6de;border-radius:2px;background:linear-gradient(#d3e2f6,#bdd2ee 50%,#c8daf2)"></div>
<div class="abs" style="left:1091px;top:708px;width:19px;height:19px;border:1px solid #d9a04c;border-radius:2px 0 0 2px;background:linear-gradient(#fbd9a0,#fbb850 50%,#fde59a)"></div>
<div style="position:absolute;left:1127px;top:709px;width:1px;height:17px;background:#a3bde0"></div>
<div style="position:absolute;left:1145px;top:709px;width:1px;height:17px;background:#a3bde0"></div>
<div style="position:absolute;left:1163px;top:709px;width:1px;height:17px;background:#a3bde0"></div>
<svg class="abs" style="left:1093px;top:710px" width="16" height="15" viewBox="0 0 16 15"><rect x="2.500" y="1.500" width="10" height="12" fill="#fff" stroke="#333"/><path d="M4.500 4.500h6M4.500 6.500h6M4.500 8.500h6M4.500 10.500h6" stroke="#555"/></svg>
<svg class="abs" style="left:1111px;top:710px" width="16" height="15" viewBox="0 0 16 15"><path d="M1.500 2.500c2-1 4.500-1 6 0 1.500-1 4-1 6 0v9c-2-1-4.500-1-6 0-1.500-1-4-1-6 0z" fill="#fff" stroke="#333" stroke-width=".9"/><path d="M7.500 2.500v9" stroke="#333"/><path d="M3 5h3M3 7h3M3 9h3M9 5h3M9 7h3M9 9h3" stroke="#777" stroke-width=".8"/><path d="M6.500 11.500l1 2 1-2" fill="#333"/></svg>
<svg class="abs" style="left:1129px;top:710px" width="16" height="15" viewBox="0 0 16 15"><rect x="1.500" y="1.500" width="10" height="10" fill="#fff" stroke="#333"/><path d="M3.500 4.500h6M3.500 6.500h6M3.500 8.500h3" stroke="#666"/><circle cx="11" cy="10.500" r="3.300" fill="#3a8a4a" stroke="#2a5aa8" stroke-width=".8"/><path d="M9 10c1-1.500 2.500-1.500 4 0" stroke="#7cc0f0" fill="none"/></svg>
<svg class="abs" style="left:1147px;top:710px" width="16" height="15" viewBox="0 0 16 15"><path d="M2 2.500h8M5 5.500h8M5 8.500h6M7 11.500h6" stroke="#333"/><path d="M2.500 5.500h.1M2.500 8.500h.1M4.500 11.500h.1" stroke="#333" stroke-linecap="square"/></svg>
<svg class="abs" style="left:1165px;top:710px" width="16" height="15" viewBox="0 0 16 15"><path d="M2 2.500h12M2 4.500h12M2 6.500h12M2 8.500h12M2 10.500h12M2 12.500h12" stroke="#333"/></svg>
<span class="t" style="left:1191.6px;top:710.74px;font-size:12px;color:#15428b;letter-spacing:-1.601px;">100%</span>
<svg class="abs" style="left:1226.7px;top:709px" width="16" height="16" viewBox="0 0 16 16"><defs><linearGradient id="zb0" x1="0" y1="0" x2="0" y2="1"><stop offset="0" stop-color="#fdfeff"/><stop offset=".5" stop-color="#dfe6f2"/><stop offset="1" stop-color="#f4f7fb"/></linearGradient></defs><circle cx="8" cy="8" r="7.200" fill="url(#zb0)" stroke="#5a6d94" stroke-width="1"/><path d="M4.500 8h7" stroke="#3a3f55" stroke-width="1.800"/></svg>
<svg class="abs" style="left:1344.6px;top:709px" width="16" height="16" viewBox="0 0 16 16"><defs><linearGradient id="zb1" x1="0" y1="0" x2="0" y2="1"><stop offset="0" stop-color="#fdfeff"/><stop offset=".5" stop-color="#dfe6f2"/><stop offset="1" stop-color="#f4f7fb"/></linearGradient></defs><circle cx="8" cy="8" r="7.200" fill="url(#zb1)" stroke="#5a6d94" stroke-width="1"/><path d="M4.500 8h7" stroke="#3a3f55" stroke-width="1.800"/><path d="M8 4.500v7" stroke="#3a3f55" stroke-width="1.800"/></svg>
<div style="position:absolute;left:1243px;top:716px;width:102px;height:1px;background:#5f7fb4"></div>
<div style="position:absolute;left:1243px;top:717px;width:102px;height:1px;background:#e8f0fb"></div>
<div style="position:absolute;left:1293px;top:713px;width:1px;height:8px;background:#5f7fb4"></div>
<svg class="abs" style="left:1288px;top:709px" width="11" height="15" viewBox="0 0 11 15"><path d="M1.500 1.500h8v7.500l-4 4.500-4-4.500z" fill="#e9eef7" stroke="#566b96" stroke-width="1"/><path d="M4.500 3.500h2v5h-2z" fill="#b8c6de"/></svg>
<div style="position:absolute;left:0px;top:728px;width:1366px;height:40px;background:#102b4a"></div>
<svg class="abs" style="left:11px;top:735px" width="26" height="26" viewBox="0 0 26 26"><path d="M.6 2.800L10.300 1.500V12H.6zM11.600 1.300L25.200 .3V12H11.600zM.6 13.300H10.300V23.800L.6 22.500zM11.600 13.300H25.200V25.200L11.600 24z" fill="#fff"/></svg>
<svg class="abs" style="left:63px;top:739px" width="18" height="17" viewBox="0 0 18 17" fill="none" stroke="#fff" stroke-width="1.200"><rect x="2.500" y="4.500" width="9" height="8"/><path d="M1 3V1.500h12V3M1 14v1.500h12V14M15.500 1v15"/><rect x="14.500" y="5" width="2" height="3" fill="#fff" stroke="none"/></svg>
<svg class="abs" style="left:115px;top:735px" width="26" height="26" viewBox="0 0 26 26"><defs><linearGradient id="al" x1="0" y1="1" x2="1" y2="0"><stop offset="0" stop-color="#c95ae6"/><stop offset=".5" stop-color="#a05cf5"/><stop offset="1" stop-color="#6f63ff"/></linearGradient></defs><circle cx="13" cy="13" r="12.200" fill="url(#al)"/><path d="M13 7.500c1 0 1.700.6 2.300 1.600l3.200 5.600c1 1.800.2 3.300-1.800 3.500-2.500.3-5 .3-7.400 0-2-.2-2.800-1.700-1.800-3.500l3.200-5.600c.6-1 1.300-1.600 2.300-1.600z" fill="#fff"/></svg>
<svg class="abs" style="left:175px;top:731px" width="33" height="32" viewBox="0 0 33 32">
<defs><linearGradient id="ie" x1="0" y1="0" x2="0" y2="1"><stop offset="0" stop-color="#8ee0ff"/><stop offset=".45" stop-color="#3ab4f2"/><stop offset="1" stop-color="#1b78d2"/></linearGradient></defs>
<path d="M27.500 17.500A9.800 9.800 0 1 0 24.600 24.500" fill="none" stroke="url(#ie)" stroke-width="6.600"/>
<path d="M9 15.300h21.600c.3 1.600 .3 3.200 0 4.800H9z" fill="url(#ie)"/>
<path d="M4 29.500C.5 26 2 16 9 9 15.500 3 26 0 30 3c2 1.500 1.200 5-1 8.500" fill="none" stroke="#f4bd2e" stroke-width="2.200"/>
<path d="M4 29.500c1.500 1.600 5.500 .8 9.500-1.500" fill="none" stroke="#f0b429" stroke-width="2.200"/></svg>
<div class="abs" style="left:223px;top:729px;width:50px;height:38px;background:#3d5169;border:1px solid #6c7c92"></div>
<div style="position:absolute;left:274px;top:729px;width:3px;height:38px;background:#3d5169;border:1px solid #6c7c92;border-left:none"></div>
<div style="position:absolute;left:278px;top:729px;width:3px;height:38px;background:#3d5169;border:1px solid #6c7c92;border-left:none"></div>
<svg class="abs" style="left:233px;top:734px" width="30" height="27" viewBox="0 0 30 27">
<path d="M1 3.500c0-1 .8-1.800 1.800-1.800H11l2.500 2.800H28c.6 0 1 .5 1 1V24c0 .6-.4 1-1 1H2c-.6 0-1-.4-1-1z" fill="#f3c34a"/>
<path d="M1 7.500h28V24c0 .6-.4 1-1 1H2c-.6 0-1-.4-1-1z" fill="#ffe795"/>
<path d="M6 15h18v10H6z" fill="#3aa5ea"/><path d="M10.500 19.500h9v5.500h-9z" fill="#ffe795"/><path d="M3 3.200h7" stroke="#fff" stroke-width=".8" opacity=".7"/></svg>
<svg class="abs" style="left:298px;top:736px" width="28" height="26" viewBox="0 0 28 26">
<rect x="6" y="1" width="20" height="22" rx="1.500" fill="#5b8fd0" opacity=".75"/><rect x="3.500" y="2" width="20" height="22" rx="1.500" fill="#7fb0e6" opacity=".8"/>
<rect x="1" y="3" width="20" height="22" rx="1.500" fill="#9cc6f0"/>
<circle cx="11" cy="14" r="8.300" fill="#f47a1c" stroke="#fbd9b5" stroke-width="1"/><path d="M8.500 9.500l7 4.500-7 4.500z" fill="#fff"/></svg>
<div class="abs" style="left:345px;top:729px;width:58px;height:38px;background:#3d5169;border:1px solid #6c7c92"></div>
<svg class="abs" style="left:358px;top:732px" width="32" height="32" viewBox="0 0 32 32"><circle cx="16" cy="16" r="15" fill="#f7f7f7"/><path d="M8.700 9L16 18.200V26.500M23.300 9L16 18.200" fill="none" stroke="#e8202a" stroke-width="3" stroke-linecap="round"/></svg>
<div class="abs" style="left:406px;top:729px;width:58px;height:38px;background:#3d5169;border:1px solid #6c7c92"></div>
<svg class="abs" style="left:420px;top:733px" width="30" height="30" viewBox="0 0 30 30"><defs><radialGradient id="c1" cx=".5" cy=".3" r=".75"><stop offset="0" stop-color="#fff9b0"/><stop offset=".45" stop-color="#fde34a"/><stop offset=".8" stop-color="#f5bd18"/><stop offset="1" stop-color="#d9920a"/></radialGradient></defs>
<circle cx="15" cy="15" r="14.300" fill="url(#c1)"/>
<path d="M3.500 11.500l3-2.200h1.500V20" fill="none" stroke="#e0201c" stroke-width="2.200"/>
<path d="M20.500 11.800c-1-1.600-2.600-2.400-4.500-2.400-3 0-5 2.200-5 5.300s2 5.300 5 5.300h12" fill="none" stroke="#e0201c" stroke-width="2.200"/>
<path d="M28 17.200H16.500c-1.300 0-2.200-1-2.200-2.400s.9-2.400 2.200-2.400c1 0 1.700.4 2.200 1.200" fill="none" stroke="#e0201c" stroke-width="1.300"/></svg>
<div class="abs" style="left:467px;top:729px;width:58px;height:38px;background:linear-gradient(#65768b,#8594a7);border:1px solid #dfe4ea"></div>
<svg class="abs" style="left:480px;top:732px" width="32" height="32" viewBox="0 0 32 32">
<defs><linearGradient id="wd" x1="0" y1="0" x2="1" y2="1"><stop offset="0" stop-color="#5f8fe0"/><stop offset="1" stop-color="#1f49a8"/></linearGradient></defs>
<path d="M9 2.500l17.500 1.500 3.500 3.500-1 23L9.500 29z" fill="#f6f8fc" stroke="#8fa0bd" stroke-width=".8"/>
<path d="M1.500 5.500C5 2.500 9 1.500 13 2v25.500c-4-1-8 0-11.500 2.500z" fill="url(#wd)"/>
<path d="M12 8.500h14M12 11.500h14" stroke="#2a4da0" stroke-width="1.200" opacity=".0"/>
<text x="11.500" y="15" font-family="Liberation Serif,serif" font-style="italic" font-weight="bold" font-size="12" fill="#1f3f94">W</text>
<path d="M23 7.500h4M23 10h4M23 12.500h4M12 17.500h15M12 20.500h15M12 23.500h15" stroke="#2a4da0" stroke-width="1.600"/></svg>
<svg class="abs" style="left:1110px;top:745px" width="9" height="6"><path d="M0 5.500h9L4.500 .5z" fill="#fff"/></svg>
<svg class="abs" style="left:1130px;top:741px" width="19" height="14" viewBox="0 0 19 14" fill="none" stroke="#fff" stroke-width="1.200"><rect x="5.500" y="4.500" width="11" height="7"/><path d="M17 6.500h1.500v3H17"/><path d="M2.500 1v3M5 1v3M1 4.500h5.500v2.500c0 1.500-1 2.500-2.700 2.500v3" /><rect x="7" y="6" width="8" height="4" fill="#fff" stroke="none"/></svg>
<svg class="abs" style="left:1157px;top:742px" width="15" height="13" viewBox="0 0 15 13" fill="none" stroke="#fff"><circle cx="11.500" cy="11" r="1.200" fill="#fff" stroke="none"/><path d="M8 11.500a3.500 3.500 0 0 1 3.500-3.500" stroke-width="1.200"/><path d="M5 11.500a6.500 6.500 0 0 1 6.500-6.500" stroke-width="1.200"/><path d="M1.500 11.500a10 10 0 0 1 10-10" stroke-width="1.200" opacity=".8"/></svg>
<svg class="abs" style="left:1178px;top:741px" width="19" height="15" viewBox="0 0 19 15" fill="none" stroke="#fff" stroke-width="1.200"><path d="M1.500 5.500h3l4-3.500v11l-4-3.500h-3z"/><path d="M10.500 5.500c1 1 1 3 0 4M12.500 3.500c2 2 2 6 0 8" /><path d="M14.800 1.500c3 3 3 9 0 12" opacity=".45"/></svg>
<span class="t" style="left:1206.6px;top:741.44px;font-size:12px;color:#fff;letter-spacing:-1.316px;">РУС</span>
<span class="t" style="left:1257px;top:732.64px;font-size:12px;color:#fff;letter-spacing:-0.783px;">20:17</span>
<span class="t" style="left:1241.3px;top:750.64px;font-size:12px;color:#fff;letter-spacing:-0.679px;">Ср 17.02.21</span>
<svg class="abs" style="left:1318px;top:739px" width="18" height="18" viewBox="0 0 18 18" fill="none" stroke="#fff" stroke-width="1.200"><path d="M1.500 1.500h15v11h-4.500l-3 3-3-3H1.500z"/></svg>
<svg class="abs" style="left:3px;top:3px" width="38" height="38" viewBox="3 3 38 38">
<defs><radialGradient id="ob" cx=".5" cy=".32" r=".72"><stop offset="0" stop-color="#ffffff"/><stop offset=".6" stop-color="#eef0f4"/><stop offset=".86" stop-color="#c5ccd9"/><stop offset="1" stop-color="#98a4b8"/></radialGradient>
<linearGradient id="og" x1="0" y1="0" x2="1" y2="1"><stop offset="0" stop-color="#d8401a"/><stop offset="1" stop-color="#f39a2c"/></linearGradient>
<linearGradient id="yg" x1="0" y1="0" x2="1" y2="1"><stop offset="0" stop-color="#f8cf45"/><stop offset="1" stop-color="#ee9d1a"/></linearGradient>
<linearGradient id="gg" x1="0" y1="0" x2="1" y2="1"><stop offset="0" stop-color="#8cc84a"/><stop offset="1" stop-color="#3f8f2c"/></linearGradient></defs>
<circle cx="22.100" cy="22" r="17.600" fill="url(#ob)" stroke="#8f9bb0" stroke-width="1"/>
<ellipse cx="22" cy="13" rx="13.500" ry="8" fill="#fff" opacity=".55"/>
<g fill="none" stroke-linejoin="round">
<path d="M18 21.500h-5.500v-9h9V18" stroke="url(#og)" stroke-width="3"/>
<path d="M25 17.300h5v4.500h-3.500" stroke="#3b8fd9" stroke-width="2"/>
<path d="M18.500 25.500h-4.500v7h7.500V29" stroke="url(#yg)" stroke-width="3"/>
<path d="M26 25.500h6v6h-6.500V29" stroke="url(#gg)" stroke-width="3"/></g>
<circle cx="21.200" cy="21.600" r="1.100" fill="#e2581a"/><circle cx="24.300" cy="21.600" r="1" fill="#3b8fd9"/><circle cx="21.200" cy="24.700" r="1" fill="#f2b01e"/><circle cx="24.300" cy="24.700" r="1.100" fill="#58a838"/>
</svg>
<svg class="abs" style="left:52px;top:5px" width="16" height="16" viewBox="0 0 16 16">
<path d="M1 1.500h13.500v13H2.500L1 13z" fill="#4a3fb0" stroke="#2a2578" stroke-width=".8"/>
<rect x="3.500" y="1.500" width="8.500" height="6" fill="#f4f4fa"/><rect x="3.500" y="1.500" width="8.500" height="1.500" fill="#c9c9e8"/>
<rect x="4.500" y="10" width="7" height="4.500" fill="#d9d9e6"/><rect x="5.500" y="11" width="2" height="3" fill="#2a2578"/></svg>
<svg class="abs" style="left:76px;top:6px" width="14" height="14" viewBox="0 0 14 14" fill="none"><path d="M3 4.500c3-2.500 7-1.500 7.500 2 .4 2.500-1 4.500-2.500 6" stroke="#4f6fd0" stroke-width="1.800"/><path d="M.5 2.500l1 5.500 4.500-2z" fill="#4f6fd0"/></svg>
<svg class="abs" style="left:93.0px;top:12.0px" width="6" height="4" viewBox="0 0 6 4"><path d="M0 0h6l-3.0 3.5z" fill="#cfe0f6"/></svg>
<svg class="abs" style="left:107px;top:6px" width="14" height="14" viewBox="0 0 14 14" fill="none"><path d="M11 4.500c-3-2.500-7-1.500-7.500 2-.4 2.500 1 4.500 2.500 6" stroke="#4f6fd0" stroke-width="1.800"/><path d="M13.500 2.500l-1 5.500-4.500-2z" fill="#4f6fd0"/></svg>
<div style="position:absolute;left:141px;top:10px;width:6px;height:1px;background:#d6e6fa"></div>
<svg class="abs" style="left:140.5px;top:13.0px" width="7" height="4" viewBox="0 0 7 4"><path d="M0 0h7l-3.5 3.5z" fill="#d6e6fa"/></svg>
</body>
</html>
